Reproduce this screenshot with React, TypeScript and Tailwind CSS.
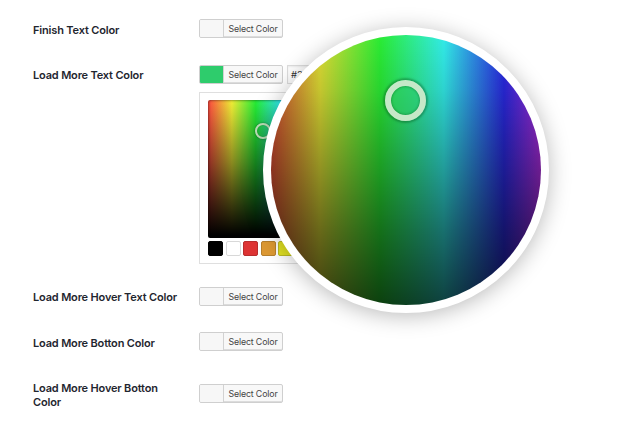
const swatches = [
  "bg-black border-black",
  "bg-white border-[#d8d8d8]",
  "bg-[#dd3333] border-[#b72d2d]",
  "bg-[#dd9933] border-[#b7802d]",
  "bg-[#e2e222] border-[#bcbc23]",
  "bg-[#81d742] border-[#6daf3c]",
];

function ColorButton({ color = "bg-[#f7f7f7]" }: { color?: string }) {
  return (
    <button className="flex h-[19px] w-[84px] shrink-0 overflow-hidden rounded-[2px] border border-[#cfcfcf] bg-[#f8f8f8] shadow-[inset_0_-1px_0_#dcdcdc]">
      <span className={`h-full w-[23px] shrink-0 ${color}`} />
      <span className="h-full flex-1 whitespace-nowrap border-l border-[#d2d2d2] text-center text-[8.8px] leading-[18px] tracking-[-0.14px] text-[#444]">
        Select Color
      </span>
    </button>
  );
}

function Label({ children, pad = "pt-[4px]" }: { children: string; pad?: string }) {
  return (
    <div
      className={`w-[166px] shrink-0 pr-4 text-[11px] font-semibold leading-[13.5px] tracking-[-0.17px] text-[#1f262f] ${pad}`}
    >
      {children}
    </div>
  );
}

function Setting({
  label,
  className,
  offset = "pt-0",
  pad,
}: {
  label: string;
  className: string;
  offset?: string;
  pad?: string;
}) {
  return (
    <div className={`flex items-start ${className}`}>
      <Label pad={pad}>{label}</Label>
      <div className={offset}>
        <ColorButton />
      </div>
    </div>
  );
}

function Picker() {
  return (
    <div className="h-[172px] w-[200px] border border-[#dfdfdf] bg-white pl-[8px] pt-[7px]">
      <div className="relative h-[138px] w-[143px] overflow-hidden rounded-[2px] bg-[linear-gradient(to_bottom,transparent_0%,rgba(0,0,0,0.42)_45%,#000_98%),linear-gradient(to_right,#ff4a40_0%,#f0ee36_16.7%,#26ee36_33.3%,#33f0f0_50%,#3333ff_66.7%,#ff33ff_83.3%,#ff3333_100%)] shadow-[inset_0_0_3px_rgba(0,0,0,0.7)]">
        <span className="absolute left-[47px] top-[23px] size-[16px] rounded-full border-[2px] border-[#bfdfb9] shadow-[0_0_2px_rgba(0,0,0,0.5),inset_0_0_1px_rgba(0,0,0,0.4)]" />
      </div>
      <div className="mt-[3px] flex gap-[2.5px]">
        {swatches.map((c) => (
          <span key={c} className={`h-[15px] w-[15px] rounded-[2px] border ${c}`} />
        ))}
      </div>
    </div>
  );
}

function Magnifier() {
  return (
    <div className="absolute left-[263px] top-[27px] size-[286px] rounded-full border-[8px] border-white bg-white shadow-[0_3px_22px_rgba(0,0,0,0.27)]">
      <div className="relative size-full rounded-full bg-[linear-gradient(to_bottom,transparent_0%,rgba(0,0,0,0.1)_20%,rgba(0,0,0,0.34)_50%,rgba(0,0,0,0.52)_72%,rgba(0,0,0,0.73)_100%),linear-gradient(to_right,#d24a30_0%,#dcdc34_18.2%,#2aec34_40.4%,#32ebe7_64%,#2929e0_86.3%,#a82bd8_100%)]">
        <span className="absolute left-[113.5px] top-[44.5px] size-[41px] rounded-full border-[6px] border-[#c6e8c8] bg-[#2ecc66]/50 shadow-[0_0_2px_2px_rgba(0,70,20,0.35),inset_0_0_2px_1px_rgba(0,80,20,0.3)]" />
      </div>
    </div>
  );
}

export default function App() {
  return (
    <main className="relative h-[435px] w-[630px] overflow-hidden bg-white pl-[33px] pt-[19px] font-['Inter','Liberation_Sans',sans-serif]">
      <Setting label="Finish Text Color" className="h-[46px]" pad="pt-[5px]" />
      <div className="flex h-[222px] items-start">
        <Label>Load More Text Color</Label>
        <div>
          <div className="flex gap-[4px]">
            <ColorButton color="bg-[#2ecc6c]" />
            <div className="h-[19px] w-[60px] border border-[#ddd] pl-[3px] text-[9.5px] leading-[17px] text-[#333] shadow-[inset_0_1px_2px_rgba(0,0,0,0.07)]">
              #2ecc71
            </div>
          </div>
          <div className="mt-[8px]">
            <Picker />
          </div>
        </div>
      </div>
      <Setting label="Load More Hover Text Color" className="h-[45px]" />
      <Setting label="Load More Botton Color" className="h-[46px]" pad="pt-[5px]" />
      <Setting label="Load More Hover Botton Color" className="h-[40px]" offset="pt-[6px]" />
      <Magnifier />
    </main>
  );
}
